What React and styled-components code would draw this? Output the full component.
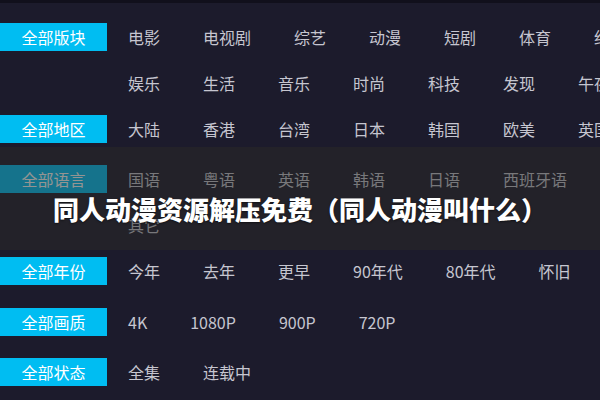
import React from "react";
import styled, { createGlobalStyle } from "styled-components";

const GlobalStyle = createGlobalStyle`
  html, body { margin: 0; padding: 0; background: #1c1b2c; overflow: hidden; }
  body { font-family: "Noto Sans CJK SC", "Noto Sans", sans-serif; }
`;

const Screen = styled.div`
  position: relative;
  width: 600px;
  height: 400px;
  overflow: hidden;
  background: #1c1b2c;
`;

const TopStrip = styled.div`
  height: 3px;
  background: #11101c;
`;

const Content = styled.div`
  width: 680px;
  padding-top: 11px;
`;

const Group = styled.div`
  display: flex;
  align-items: flex-start;
  margin-top: ${(p) => p.$gap || 0}px;
`;

const Label = styled.div`
  flex: 0 0 107px;
  height: 28px;
  margin-top: 9px;
  background: #00bdf2;
  color: #ffffff;
  font-size: 16px;
  line-height: 28px;
  text-align: center;
`;

const Items = styled.div`
  display: flex;
  flex-wrap: wrap;
  width: 552px;
  padding-left: 21px;
`;

const Item = styled.span`
  line-height: 46px;
  height: 46px;
  margin-right: 43px;
  font-size: 16px;
  color: #c6c6d0;
  white-space: nowrap;
`;

const Overlay = styled.div`
  position: absolute;
  left: 0;
  top: 147px;
  width: 600px;
  height: 103px;
  background: rgba(42, 42, 38, 0.5);
  display: flex;
  justify-content: center;
  align-items: flex-start;
  padding-top: 44px;
  box-sizing: border-box;
`;

const Title = styled.h1`
  margin: 0;
  font-size: 26px;
  line-height: 36px;
  font-weight: 900;
  color: #ffffff;
  white-space: nowrap;
  text-shadow: 0 1px 2px rgba(0, 0, 0, 0.5);
`;

const groups = [
  { label: "全部版块", gap: 0, items: ["电影", "电视剧", "综艺", "动漫", "短剧", "体育", "纪录", "娱乐", "生活", "音乐", "时尚", "科技", "发现", "午夜"] },
  { label: "全部地区", gap: 0, items: ["大陆", "香港", "台湾", "日本", "韩国", "欧美", "英国"] },
  { label: "全部语言", gap: 4, items: ["国语", "粤语", "英语", "韩语", "日语", "西班牙语", "其它"] },
  { label: "全部年份", gap: 0, items: ["今年", "去年", "更早", "90年代", "80年代", "怀旧"] },
  { label: "全部画质", gap: 5, items: ["4K", "1080P", "900P", "720P"] },
  { label: "全部状态", gap: 4, items: ["全集", "连载中"] },
];

export default function App() {
  return (
    <>
      <GlobalStyle />
      <Screen>
        <TopStrip />
        <Content>
          {groups.map((g) => (
            <Group key={g.label} $gap={g.gap}>
              <Label>{g.label}</Label>
              <Items>
                {g.items.map((it) => (
                  <Item key={it}>{it}</Item>
                ))}
              </Items>
            </Group>
          ))}
        </Content>
        <Overlay>
          <Title>同人动漫资源解压免费（同人动漫叫什么）</Title>
        </Overlay>
      </Screen>
    </>
  );
}
